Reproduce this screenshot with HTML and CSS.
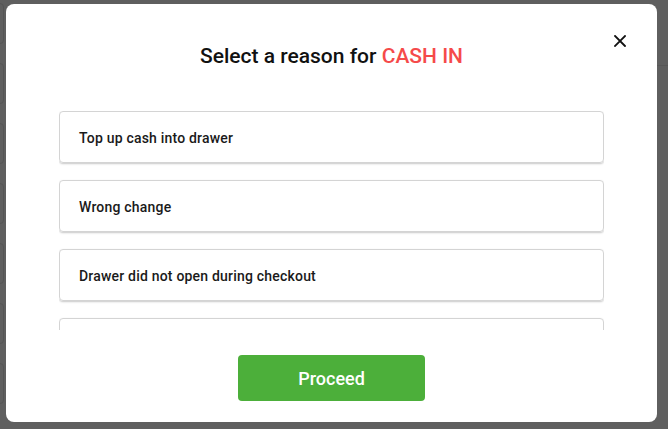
FILE: index.html
```html
<!DOCTYPE html>
<html>
<head>
<meta charset="utf-8">
<link rel="stylesheet" href="styles.css">
</head>
<body>
<div class="backdrop">
  <div class="bg-col">
    <div class="bg-card"></div>
    <div class="bg-card"></div>
    <div class="bg-card"></div>
    <div class="bg-card"></div>
    <div class="bg-card"></div>
    <div class="bg-card"></div>
    <div class="bg-card"></div>
  </div>
  <div class="bg-line"></div>
</div>
<div class="modal">
  <button class="close" aria-label="Close">
    <svg width="12" height="12" viewBox="0 0 12 12"><path d="M1 1L11 11M11 1L1 11" stroke="#111" stroke-width="1.8" stroke-linecap="square"/></svg>
  </button>
  <h1 class="title">Select a reason for <span class="accent">CASH IN</span></h1>
  <div class="list">
    <div class="item">Top up cash into drawer</div>
    <div class="item">Wrong change</div>
    <div class="item">Drawer did not open during checkout</div>
    <div class="item"></div>
  </div>
  <div class="actions">
    <button class="proceed">Proceed</button>
  </div>
</div>
</body>
</html>
```
FILE: styles.css
```css
* { box-sizing: border-box; }
html, body { margin: 0; padding: 0; }
body {
  width: 668px;
  height: 429px;
  background: #5f5f5f;
  font-family: Roboto, "Liberation Sans", sans-serif;
  overflow: hidden;
  position: relative;
}
.backdrop { position: absolute; inset: 0; }
.bg-col {
  display: flex;
  flex-direction: column;
  gap: 19px;
  padding-top: 3px;
  margin-left: -20px;
  width: 24px;
}
.bg-card {
  height: 41px;
  border: 1px solid #555;
  border-radius: 4px;
}
.bg-line {
  position: absolute;
  left: 657px;
  right: 0;
  top: 65px;
  height: 1px;
  background: #575757;
}
.modal {
  position: absolute;
  left: 6px;
  top: 4px;
  width: 651px;
  height: 418px;
  background: #fff;
  border-radius: 8px;
  display: flex;
  flex-direction: column;
  align-items: center;
  padding: 39px 53px 21px;
}
.close {
  position: absolute;
  top: 30px;
  right: 30px;
  width: 14px;
  height: 14px;
  padding: 0;
  border: 0;
  background: none;
  display: flex;
  align-items: center;
  justify-content: center;
}
.title {
  margin: 0;
  font-size: 21px;
  font-weight: 500;
  color: #111;
  line-height: 26px;
}
.accent { color: #f54a4a; }
.list {
  margin-top: 42px;
  width: 100%;
  height: 219px;
  overflow: hidden;
  display: flex;
  flex-direction: column;
  gap: 17px;
}
.item {
  flex: none;
  height: 52px;
  border: 1px solid #d4d4d4;
  border-radius: 4px;
  box-shadow: 0 1px 2px rgba(0,0,0,0.22);
  display: flex;
  align-items: center;
  padding: 1px 19px 0;
  font-size: 14px;
  font-weight: 500;
  color: #1a1a1a;
  letter-spacing: 0.2px;
}
.actions {
  margin-top: 25px;
  display: flex;
  justify-content: center;
}
.proceed {
  width: 187px;
  height: 46px;
  border: 0;
  border-radius: 4px;
  background: #4caf3a;
  color: #fff;
  font-family: Roboto, "Liberation Sans", sans-serif;
  font-size: 18px;
  font-weight: 500;
  padding-top: 2px;
}
```
